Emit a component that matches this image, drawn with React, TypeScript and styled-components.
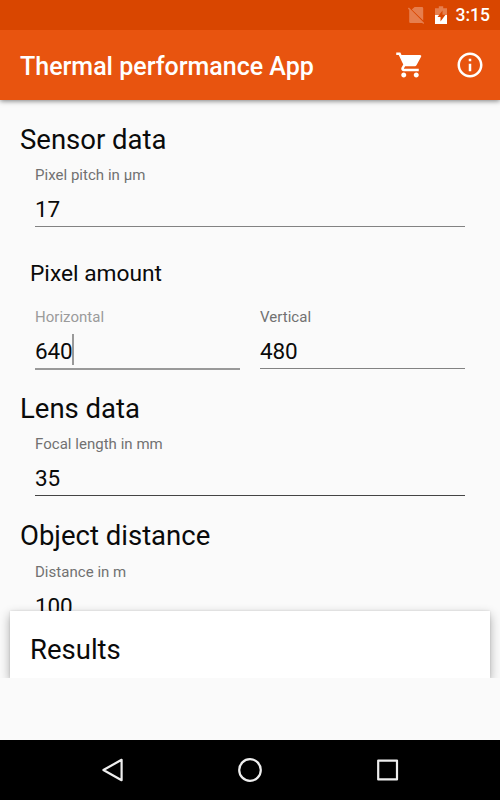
import React from 'react';
import styled, { createGlobalStyle } from 'styled-components';

const GlobalStyle = createGlobalStyle`
  *, *::before, *::after { box-sizing: border-box; }
  body { margin: 0; background: #fafafa; font-family: Roboto, sans-serif; }
`;

const Screen = styled.div`
  width: 500px;
  height: 800px;
  display: flex;
  flex-direction: column;
  overflow: hidden;
  background: #fafafa;
  color: #0a0a0a;
`;

const StatusBar = styled.div`
  height: 30px;
  flex: none;
  display: flex;
  align-items: center;
  justify-content: flex-end;
  padding-right: 10px;
  background: #d94600;
  color: #fff;
  z-index: 2;
`;

const StatusIcon = styled.svg<{ $gap: number }>`
  width: 20px;
  height: 20px;
  margin-right: ${(p) => p.$gap}px;
`;

const Clock = styled.span`
  font-size: 17.5px;
  font-weight: 500;
  line-height: 30px;
`;

const AppBar = styled.header`
  height: 70px;
  flex: none;
  display: flex;
  align-items: center;
  padding: 0 15px 0 20px;
  background: #e8540f;
  color: #fff;
  box-shadow: 0 1px 5px rgba(0, 0, 0, 0.5);
  z-index: 1;
`;

const AppTitle = styled.h1`
  margin: 3px auto 0 0;
  font-size: 25px;
  font-weight: 500;
  line-height: 30px;
`;

const ActionIcon = styled.svg`
  width: 30px;
  height: 30px;
  margin-left: 30px;
  fill: #fff;
`;

const Content = styled.main`
  height: 577.5px;
  flex: none;
  display: flex;
  flex-direction: column;
  overflow: hidden;
`;

const Form = styled.div`
  height: 510.5px;
  flex: none;
  overflow: hidden;
  padding: 23.5px 35px 0 20px;
`;

const Section = styled.section`
  height: 127.5px;
`;

const SensorSection = styled.section`
  height: 269px;
`;

const Heading = styled.h2`
  margin: 0;
  font-size: 27.5px;
  font-weight: 400;
  line-height: 32px;
`;

const SubHeading = styled.h3`
  margin: 33px 0 0 10px;
  font-size: 22.75px;
  font-weight: 400;
  line-height: 28px;
`;

const FieldRow = styled.div<{ $top: number }>`
  display: flex;
  gap: 20px;
  margin: ${(p) => p.$top}px 0 0 15px;
`;

const Field = styled.label`
  flex: 1;
  display: flex;
  flex-direction: column;
`;

const FieldLabel = styled.span<{ $focused: boolean }>`
  font-size: 15px;
  line-height: 18px;
  letter-spacing: 0.03px;
  color: ${(p) => (p.$focused ? '#9b9b9b' : '#717171')};
`;

const FieldValue = styled.span<{ $focused: boolean; $line: string }>`
  display: flex;
  align-items: flex-start;
  height: ${(p) => (p.$focused ? 43.5 : 42.5)}px;
  padding-top: 12px;
  font-size: 22.5px;
  line-height: 26px;
  letter-spacing: -0.1px;
  border-bottom: ${(p) => (p.$focused ? '2px' : '1px')} solid ${(p) => p.$line};
`;

const Caret = styled.i`
  width: 2px;
  height: 31px;
  margin: -4px 0 0 -0.5px;
  background: #999;
`;

const Results = styled.section`
  height: 67px;
  flex: none;
  margin: 0 10px;
  padding: 23.5px 20px 0;
  background: #fff;
  box-shadow: 0 4px 10px rgba(0, 0, 0, 0.32), 0 0 2px rgba(0, 0, 0, 0.12);
`;

const Spacer = styled.div`
  flex: 1;
`;

const NavBar = styled.nav`
  height: 60px;
  flex: none;
  display: flex;
  align-items: center;
  justify-content: space-between;
  padding: 0 97.5px;
  background: #000;
`;

const NavIcon = styled.svg`
  width: 30px;
  height: 30px;
  fill: none;
  stroke: #eee;
  stroke-width: 2.2;
  stroke-linejoin: round;
`;

interface InputProps {
  label: string;
  value: string;
  focused?: boolean;
  line?: string;
}

const Input = ({ label, value, focused = false, line = '#828282' }: InputProps) => (
  <Field>
    <FieldLabel $focused={focused}>{label}</FieldLabel>
    <FieldValue $focused={focused} $line={line}>
      {value}
      {focused && <Caret />}
    </FieldValue>
  </Field>
);

export default function App() {
  return (
    <Screen>
      <GlobalStyle />
      <StatusBar>
        <StatusIcon $gap={5} viewBox="0 0 20 20">
          <path d="M8.6 2H16a1.2 1.2 0 0 1 1.2 1.2V15.4L5.8 4.5z" fill="#e67e4d" />
          <path d="M2.9 2.6 18.2 17.9 17.2 18.9 16.3 18H4.4a1.2 1.2 0 0 1-1.2-1.2V4.9L1.9 3.6z" fill="#e67e4d" />
        </StatusIcon>
        <StatusIcon $gap={5} viewBox="0 0 20 20">
          <path d="M4 3.2h3.8V1.2h4.4v2H16V10H4z" fill="#e67e4d" />
          <path d="M4 10h12v9H4z" fill="#fff" />
          <path d="M11.5 5.5 6.5 12h3v4.5l5-6.8h-3z" fill="#d94600" />
        </StatusIcon>
        <Clock>3:15</Clock>
      </StatusBar>
      <AppBar>
        <AppTitle>Thermal performance App</AppTitle>
        <ActionIcon viewBox="0 0 24 24">
          <path d="M7 18c-1.1 0-1.99.9-1.99 2S5.9 22 7 22s2-.9 2-2-.9-2-2-2zM1 2v2h2l3.6 7.59-1.35 2.45c-.16.28-.25.61-.25.96 0 1.1.9 2 2 2h12v-2H7.42c-.14 0-.25-.11-.25-.25l.03-.12.9-1.63h7.45c.75 0 1.41-.41 1.75-1.03l3.58-6.49A1.003 1.003 0 0 0 20 4H5.21l-.94-2H1zm16 16c-1.1 0-1.99.9-1.99 2s.89 2 1.99 2 2-.9 2-2-.9-2-2-2z" />
        </ActionIcon>
        <ActionIcon viewBox="0 0 24 24">
          <path d="M11 17h2v-6h-2v6zm1-15C6.48 2 2 6.48 2 12s4.48 10 10 10 10-4.48 10-10S17.52 2 12 2zm0 18c-4.41 0-8-3.59-8-8s3.59-8 8-8 8 3.59 8 8-3.59 8-8 8zM11 9h2V7h-2v2z" />
        </ActionIcon>
      </AppBar>
      <Content>
        <Form>
          <SensorSection>
            <Heading>Sensor data</Heading>
            <FieldRow $top={10.5}>
              <Input label="Pixel pitch in µm" value="17" />
            </FieldRow>
            <SubHeading>Pixel amount</SubHeading>
            <FieldRow $top={20.5}>
              <Input label="Horizontal" value="640" focused line="#999" />
              <Input label="Vertical" value="480" />
            </FieldRow>
          </SensorSection>
          <Section>
            <Heading>Lens data</Heading>
            <FieldRow $top={10.5}>
              <Input label="Focal length in mm" value="35" line="#444" />
            </FieldRow>
          </Section>
          <Section>
            <Heading>Object distance</Heading>
            <FieldRow $top={10.5}>
              <Input label="Distance in m" value="100" />
            </FieldRow>
          </Section>
        </Form>
        <Results>
          <Heading>Results</Heading>
        </Results>
      </Content>
      <Spacer />
      <NavBar>
        <NavIcon viewBox="0 0 30 30">
          <path d="M5.4 15 23.6 4.8V25.2z" />
        </NavIcon>
        <NavIcon viewBox="0 0 30 30">
          <circle cx="15" cy="15" r="10.8" />
        </NavIcon>
        <NavIcon viewBox="0 0 30 30">
          <rect x="5.2" y="5.6" width="18.8" height="18.8" />
        </NavIcon>
      </NavBar>
    </Screen>
  );
}
